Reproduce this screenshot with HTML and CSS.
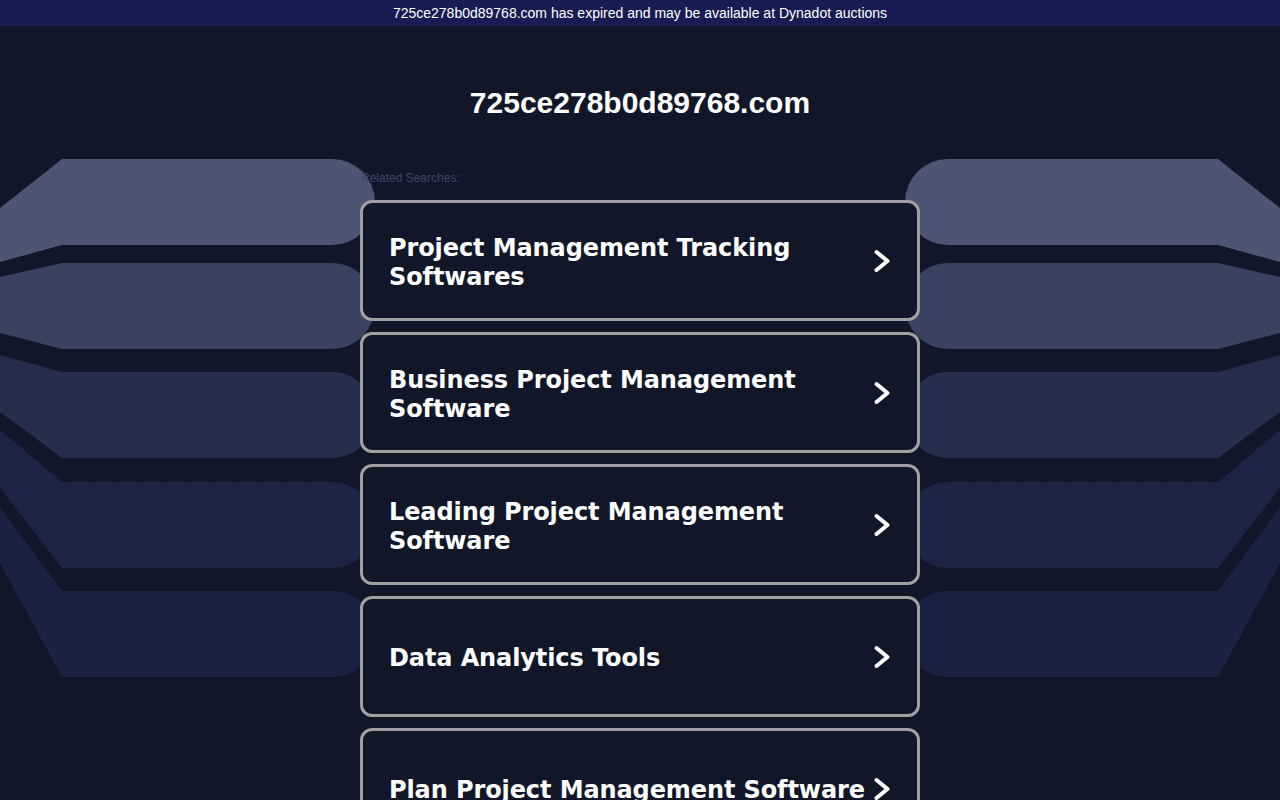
FILE: index.html
```html
<!DOCTYPE html>
<html>
<head>
<meta charset="utf-8">
<title>725ce278b0d89768.com</title>
<link rel="stylesheet" href="styles.css">
</head>
<body>
<div class="topbar">725ce278b0d89768.com has expired and may be available at Dynadot auctions</div>
<svg class="bg" viewBox="0 0 1280 800" width="1280" height="800" aria-hidden="true">
  <defs>
    <pattern id="dots" width="3" height="3" patternUnits="userSpaceOnUse">
      <rect width="1" height="1" fill="#2a3357" opacity="0.35"/>
    </pattern>
    <g id="bands">
      <path d="M0,208 L62,159 L332,159 A43,43 0 0 1 332,245 L62,245 L0,262 Z" fill="#4c5573"/>
      <path d="M0,277 L62,263 L332,263 A43,43 0 0 1 332,349 L62,349 L0,333 Z" fill="#394361"/>
      <path d="M0,355 L62,372 L332,372 A43,43 0 0 1 332,458 L62,458 L0,412 Z" fill="#252e4d"/>
      <path d="M0,430 L62,482 L332,482 A43,43 0 0 1 332,568 L62,568 L0,488 Z" fill="#1c2446"/>
      <path d="M0,430 L62,482 L332,482 A43,43 0 0 1 332,568 L62,568 L0,488 Z" fill="url(#dots)"/>
      <path d="M0,507 L62,591 L332,591 A43,43 0 0 1 332,677 L62,677 L0,563 Z" fill="#1a2243"/>
      <path d="M0,507 L62,591 L332,591 A43,43 0 0 1 332,677 L62,677 L0,563 Z" fill="url(#dots)"/>
    </g>
  </defs>
  <use href="#bands"/>
  <use href="#bands" transform="translate(1280,0) scale(-1,1)"/>
</svg>
<main class="main">
  <h1 class="domain">725ce278b0d89768.com</h1>
  <div class="results">
    <div class="related">Related Searches:</div>
    <a class="card" href="#"><span class="label">Project Management Tracking Softwares</span><svg class="chev" viewBox="0 0 18 24" width="18" height="24"><path d="M3.5,3 L14.5,12 L3.5,21" fill="none" stroke="#fff" stroke-width="4" stroke-linecap="round" stroke-linejoin="round"/></svg></a>
    <a class="card" href="#"><span class="label">Business Project Management Software</span><svg class="chev" viewBox="0 0 18 24" width="18" height="24"><path d="M3.5,3 L14.5,12 L3.5,21" fill="none" stroke="#fff" stroke-width="4" stroke-linecap="round" stroke-linejoin="round"/></svg></a>
    <a class="card" href="#"><span class="label">Leading Project Management Software</span><svg class="chev" viewBox="0 0 18 24" width="18" height="24"><path d="M3.5,3 L14.5,12 L3.5,21" fill="none" stroke="#fff" stroke-width="4" stroke-linecap="round" stroke-linejoin="round"/></svg></a>
    <a class="card" href="#"><span class="label">Data Analytics Tools</span><svg class="chev" viewBox="0 0 18 24" width="18" height="24"><path d="M3.5,3 L14.5,12 L3.5,21" fill="none" stroke="#fff" stroke-width="4" stroke-linecap="round" stroke-linejoin="round"/></svg></a>
    <a class="card" href="#"><span class="label">Plan Project Management Software</span><svg class="chev" viewBox="0 0 18 24" width="18" height="24"><path d="M3.5,3 L14.5,12 L3.5,21" fill="none" stroke="#fff" stroke-width="4" stroke-linecap="round" stroke-linejoin="round"/></svg></a>
  </div>
</main>
</body>
</html>
```
FILE: styles.css
```css
html, body {
  margin: 0;
  padding: 0;
}
body {
  background: #111729;
  font-family: "Liberation Sans", Arial, sans-serif;
  color: #fff;
  height: 800px;
  overflow: hidden;
  position: relative;
}
.topbar {
  height: 26px;
  line-height: 26px;
  background: #171c52;
  color: #fff;
  font-size: 14px;
  text-align: center;
  position: relative;
  z-index: 1;
}
.bg {
  position: absolute;
  top: 0;
  left: 0;
  z-index: 0;
}
.main {
  position: relative;
  z-index: 1;
  display: flex;
  flex-direction: column;
  align-items: center;
}
.domain {
  margin: 60px 0 0;
  font-size: 30px;
  line-height: 34px;
  font-weight: bold;
  color: #fff;
}
.results {
  width: 560px;
  margin-top: 51px;
  display: flex;
  flex-direction: column;
  gap: 11px;
}
.related {
  font-size: 12px;
  color: #3a466b;
  line-height: 14px;
  margin-left: 1px;
  margin-bottom: 4px;
}
.card {
  box-sizing: border-box;
  height: 121px;
  border: 3px solid #a0a0a0;
  border-radius: 12px;
  background: #111729;
  display: flex;
  align-items: center;
  justify-content: space-between;
  padding: 0 26px 0 26px;
  text-decoration: none;
  color: #fff;
}
.label {
  font-family: "DejaVu Sans", Verdana, sans-serif;
  font-weight: bold;
  font-size: 24px;
  line-height: 29px;
  letter-spacing: -0.1px;
  max-width: 480px;
  padding-top: 4px;
}
.chev {
  flex: none;
  margin-top: 1px;
}
```
